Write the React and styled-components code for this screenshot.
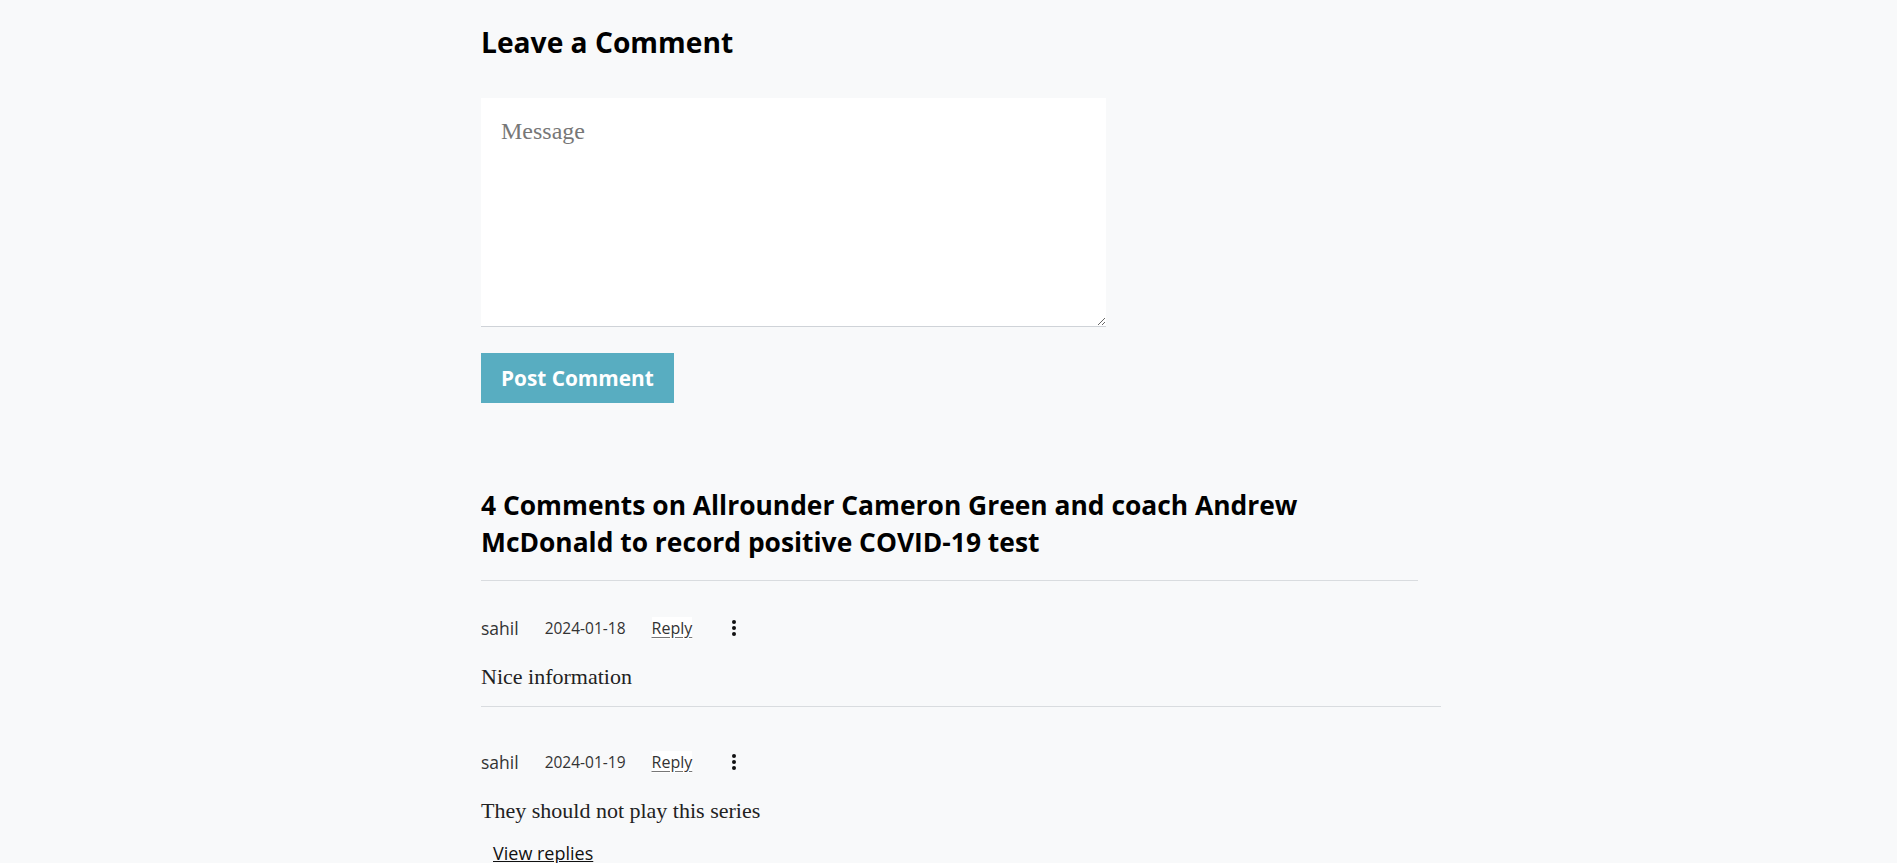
import React from 'react';
import styled, { createGlobalStyle } from 'styled-components';

const GlobalStyle = createGlobalStyle`
  html, body {
    margin: 0;
    padding: 0;
    background: #f8f9fa;
  }
  body {
    font-family: "Liberation Serif", "Times New Roman", serif;
    color: #212529;
  }
  * { box-sizing: border-box; }
`;

const Page = styled.main`
  width: 960px;
  margin-left: 481px;
  padding: 22px 0 60px;
`;

const FormSection = styled.section`
  display: flex;
  flex-direction: column;
  align-items: flex-start;
`;

const Title = styled.h2`
  margin: 0 0 36px;
  font-family: "Open Sans", "Liberation Sans", sans-serif;
  font-weight: 700;
  font-size: 28.2px;
  line-height: 40px;
  color: #000;
`;

const MessageBox = styled.textarea`
  display: block;
  width: 625px;
  height: 229px;
  padding: 20px;
  border: none;
  border-bottom: 1px solid #cfd3d8;
  border-radius: 0;
  background: #fff;
  font-family: "Liberation Serif", "Times New Roman", serif;
  font-size: 24px;
  color: #212529;
  outline: none;
  &::placeholder {
    color: #777;
  }
`;

const PostButton = styled.button`
  margin-top: 26px;
  height: 50px;
  padding: 0 20px;
  border: none;
  background: #58adc1;
  color: #fff;
  font-family: "Open Sans", "Liberation Sans", sans-serif;
  font-weight: 700;
  font-size: 20.8px;
  cursor: pointer;
`;

const CommentsSection = styled.section`
  margin-top: 84px;
`;

const CommentsTitle = styled.h2`
  margin: 0;
  max-width: 900px;
  font-family: "Open Sans", "Liberation Sans", sans-serif;
  font-weight: 700;
  font-size: 26.4px;
  line-height: 37px;
  color: #000;
`;

const TitleRule = styled.hr`
  width: 937px;
  margin: 19px 0 0;
  border: 0;
  border-top: 1px solid #d9dcdf;
`;

const CommentList = styled.div`
  display: flex;
  flex-direction: column;
`;

const Comment = styled.article`
  padding: 35px 0 16px;
  border-bottom: ${(p) => (p.$last ? 'none' : '1px solid #d9dcdf')};
  & + & {
    padding-top: 43px;
  }
`;

const Meta = styled.div`
  display: flex;
  align-items: center;
  height: 24px;
  font-family: "Open Sans", "Liberation Sans", sans-serif;
`;

const Author = styled.span`
  font-size: 17.5px;
  line-height: 24px;
  color: #333;
  margin-right: 26px;
`;

const DateText = styled.span`
  font-size: 15.5px;
  line-height: 24px;
  color: #333;
  margin-right: 26px;
`;

const ReplyButton = styled.button`
  padding: 0;
  border: 0;
  background: #fff;
  font-family: "Open Sans", "Liberation Sans", sans-serif;
  font-size: 16px;
  line-height: 22px;
  color: #333;
  text-decoration: underline;
  text-decoration-color: #777;
  text-underline-offset: 3px;
  cursor: pointer;
  margin-right: 39px;
`;

const MenuButton = styled.button`
  display: flex;
  align-items: center;
  justify-content: center;
  padding: 0;
  border: 0;
  background: transparent;
  width: 6px;
  height: 18px;
  cursor: pointer;
`;

const Body = styled.p`
  margin: 24px 0 0;
  font-size: 22px;
  line-height: 26px;
  color: #222;
`;

const ViewReplies = styled.button`
  display: block;
  margin: 17px 0 0 12px;
  padding: 0;
  border: 0;
  background: transparent;
  font-family: "Open Sans", "Liberation Sans", sans-serif;
  font-size: 18px;
  line-height: 24px;
  color: #111;
  text-decoration: underline;
  cursor: pointer;
`;

const Dots = () => (
  <svg width="4" height="16" viewBox="0 0 4 16" aria-hidden="true">
    <circle cx="2" cy="2" r="2" fill="#111" />
    <circle cx="2" cy="8" r="2" fill="#111" />
    <circle cx="2" cy="14" r="2" fill="#111" />
  </svg>
);

const comments = [
  { id: 1, author: 'sahil', date: '2024-01-18', text: 'Nice information', replies: false },
  { id: 2, author: 'sahil', date: '2024-01-19', text: 'They should not play this series', replies: true },
];

export default function App() {
  return (
    <>
      <GlobalStyle />
      <Page>
        <FormSection>
          <Title>Leave a Comment</Title>
          <MessageBox placeholder="Message" />
          <PostButton type="button">Post Comment</PostButton>
        </FormSection>

        <CommentsSection>
          <CommentsTitle>
            4 Comments on Allrounder Cameron Green and coach Andrew McDonald to record positive COVID-19 test
          </CommentsTitle>
          <TitleRule />
          <CommentList>
            {comments.map((c, i) => (
              <Comment key={c.id} $last={i === comments.length - 1}>
                <Meta>
                  <Author>{c.author}</Author>
                  <DateText>{c.date}</DateText>
                  <ReplyButton type="button">Reply</ReplyButton>
                  <MenuButton type="button" aria-label="More">
                    <Dots />
                  </MenuButton>
                </Meta>
                <Body>{c.text}</Body>
                {c.replies && <ViewReplies type="button">View replies</ViewReplies>}
              </Comment>
            ))}
          </CommentList>
        </CommentsSection>
      </Page>
    </>
  );
}
